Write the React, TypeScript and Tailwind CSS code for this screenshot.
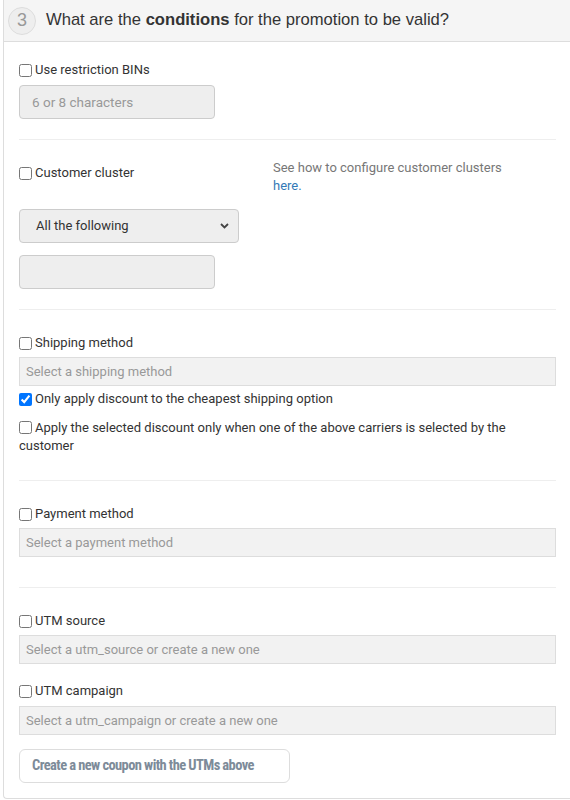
import React from "react";

function Check({ label, checked = false }: { label: string; checked?: boolean }) {
  return (
    <label className="flex items-center text-[13px] leading-[20px] text-[#333]">
      <input type="checkbox" defaultChecked={checked} className="m-0 mr-[3px] h-[13px] w-[13px] accent-[#0075ff]" />
      <span>{label}</span>
    </label>
  );
}

function FlatInput({ placeholder }: { placeholder: string }) {
  return (
    <div className="h-[29px] border border-[#ddd] bg-[#f2f2f2] px-[6px] text-[13px] leading-[27px] text-[#999]">
      {placeholder}
    </div>
  );
}

function Divider() {
  return <div className="h-px bg-[#eee]" />;
}

export default function App() {
  return (
    <div className="w-[570px] h-[800px] overflow-hidden bg-white" style={{ fontFamily: "Roboto, 'Liberation Sans', Arial, sans-serif" }}>
      <div className="ml-[3px] border-l border-b border-[#ddd] rounded-bl-[4px] h-[799px]">
        <div className="flex h-[42px] items-center border-b border-[#ddd] bg-[#f5f5f5] pl-[4px]">
          <div className="flex h-[28px] w-[28px] items-center justify-center rounded-full border border-[#ddd] bg-[#eee] text-[18px] text-[#999]" style={{ fontFamily: "'Liberation Sans', Arial, sans-serif" }}>
            3
          </div>
          <div className="ml-[10px] text-[16.6px] text-[#333]" style={{ fontFamily: "'Liberation Sans', Arial, sans-serif" }}>
            What are the <b>conditions</b> for the promotion to be valid?
          </div>
        </div>

        <div className="pl-[15px] pr-[14px]">
          {/* BINs */}
          <div className="pt-[18px] pb-[20px]">
            <Check label="Use restriction BINs" />
            <div className="mt-[5px] flex h-[34px] w-[196px] items-center rounded-[4px] border border-[#ccc] bg-[#eee] px-[12px] text-[13.5px] text-[#999]">
              6 or 8 characters
            </div>
          </div>
          <Divider />

          {/* Customer cluster */}
          <div className="pt-[19px] pb-[20px]">
            <div className="flex items-start">
              <div className="w-[254px] pt-[4px]">
                <Check label="Customer cluster" />
              </div>
              <div className="text-[13px] leading-[18px] text-[#777]">
                See how to configure customer clusters
                <br />
                <span className="text-[#337ab7]">here.</span>
              </div>
            </div>
            <div className="mt-[14px] flex h-[34px] w-[220px] items-center justify-between rounded-[4px] border border-[#ccc] bg-[#eee] pl-[16px] pr-[9px] text-[13px] text-[#333]">
              <span>All the following</span>
              <svg width="9" height="6" viewBox="0 0 9 6">
                <path d="M1 1 L4.5 4.5 L8 1" stroke="#444" strokeWidth="1.8" fill="none" />
              </svg>
            </div>
            <div className="mt-[12px] h-[34px] w-[196px] rounded-[4px] border border-[#ccc] bg-[#eee]" />
          </div>
          <Divider />

          {/* Shipping */}
          <div className="pt-[23px] pb-[25px]">
            <Check label="Shipping method" />
            <div className="mt-[4px]">
              <FlatInput placeholder="Select a shipping method" />
            </div>
            <div className="mt-[3px]">
              <Check label="Only apply discount to the cheapest shipping option" checked />
            </div>
            <div className="mt-[10px] text-[13px] leading-[18px] text-[#333]">
              <input type="checkbox" className="m-0 mr-[3px] h-[13px] w-[13px] align-[-2px]" />
              Apply the selected discount only when one of the above carriers is selected by the customer
            </div>
          </div>
          <Divider />

          {/* Payment */}
          <div className="pt-[23px] pb-[30px]">
            <Check label="Payment method" />
            <div className="mt-[4px]">
              <FlatInput placeholder="Select a payment method" />
            </div>
          </div>
          <Divider />

          {/* UTM */}
          <div className="pt-[23px]">
            <Check label="UTM source" />
            <div className="mt-[4px]">
              <FlatInput placeholder="Select a utm_source or create a new one" />
            </div>
            <div className="mt-[17px]">
              <Check label="UTM campaign" />
            </div>
            <div className="mt-[5px]">
              <FlatInput placeholder="Select a utm_campaign or create a new one" />
            </div>
            <button
              className="mt-[14px] flex h-[34px] w-[271px] items-center justify-start rounded-[6px] border border-[#ddd] bg-white pl-[12px] text-[14.5px] font-bold tracking-[-0.6px] text-[#7d8b99]"
              style={{ fontFamily: "'Liberation Sans Narrow', 'Roboto Condensed', 'DejaVu Sans Condensed', sans-serif" }}
            >
              Create a new coupon with the UTMs above
            </button>
          </div>
        </div>
      </div>
    </div>
  );
}
